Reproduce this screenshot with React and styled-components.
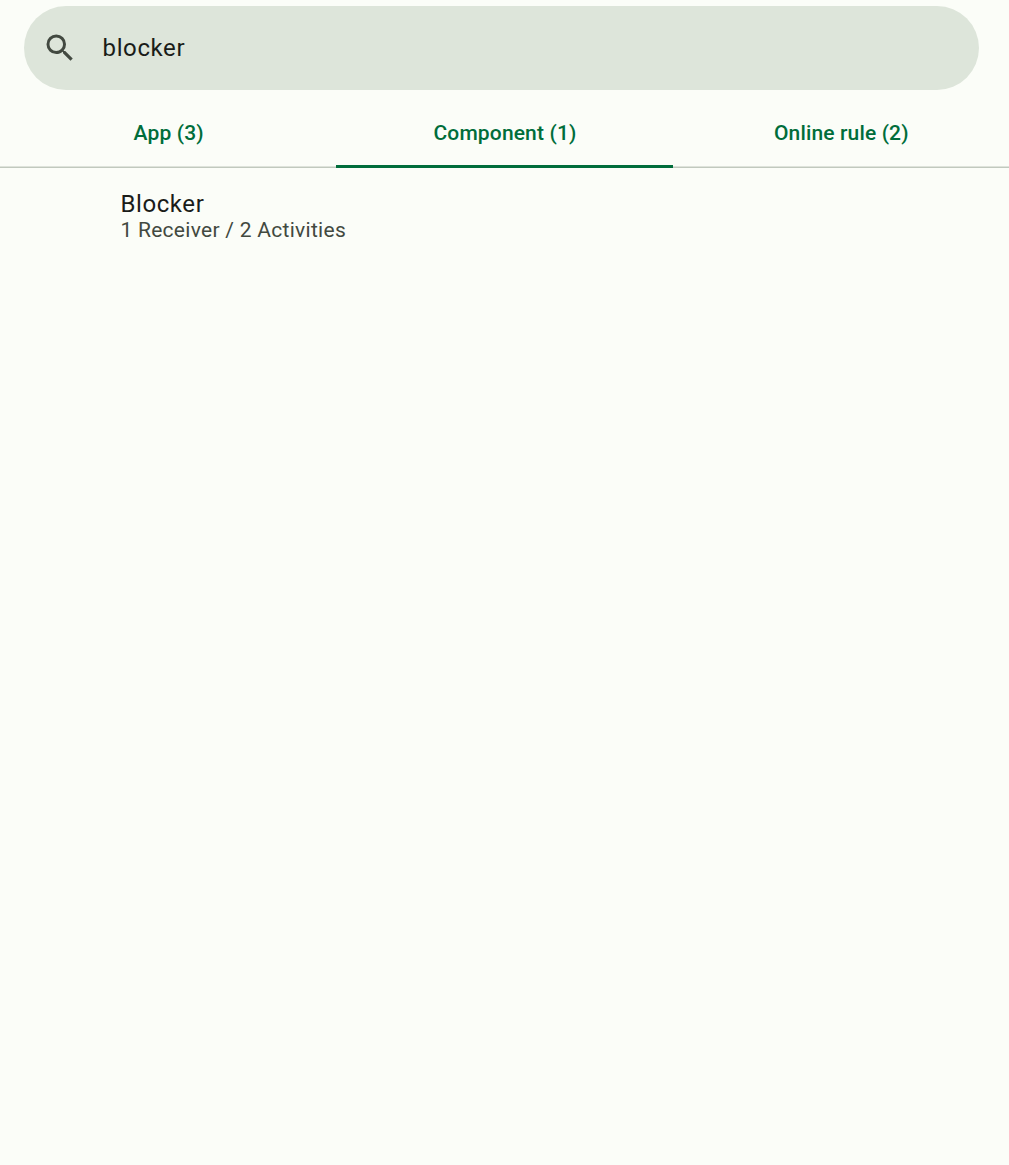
import React from "react";
import styled, { createGlobalStyle } from "styled-components";

const GlobalStyle = createGlobalStyle`
  * { box-sizing: border-box; }
  body {
    margin: 0;
    background: #fbfdf8;
    font-family: Roboto, sans-serif;
  }
`;

const Page = styled.main`
  display: flex;
  flex-direction: column;
  min-height: 1165px;
  padding-top: 6px;
  background: #fbfdf8;
`;

const SearchBar = styled.label`
  display: flex;
  align-items: center;
  gap: 24.6px;
  height: 84px;
  margin: 0 29.6px 0 24px;
  padding-left: 18px;
  border-radius: 42px;
  background: #dde5da;
  color: #424940;
`;

const SearchIcon = styled.svg`
  width: 36px;
  height: 36px;
  fill: currentColor;
`;

const Query = styled.span`
  font-size: 24px;
  line-height: 36px;
  letter-spacing: 0.6px;
  color: #1a1c19;
`;

const TabRow = styled.nav`
  display: grid;
  grid-template-columns: repeat(3, 1fr);
  height: 78px;
  box-shadow: inset 0 -1.5px 0 #c1c9be;
`;

const Tab = styled.button`
  display: flex;
  align-items: center;
  justify-content: center;
  padding: 11px 0 0 1px;
  border: 0;
  border-bottom: 3px solid ${({ $active }) => ($active ? "#006d3b" : "transparent")};
  background: transparent;
  font: 500 21px/30px Roboto, sans-serif;
  letter-spacing: 0.15px;
  color: #006d3b;
`;

const Results = styled.section`
  padding: 21px 24px 0 120.4px;
`;

const ResultTitle = styled.div`
  font-size: 24px;
  line-height: 30px;
  letter-spacing: 0.6px;
  color: #1a1c19;
`;

const ResultSummary = styled.div`
  font-size: 21px;
  line-height: 23px;
  letter-spacing: 0.28px;
  color: #424940;
`;

const tabs = [
  { label: "App (3)" },
  { label: "Component (1)", active: true },
  { label: "Online rule (2)" },
];

export default function App() {
  return (
    <>
      <GlobalStyle />
      <Page>
        <SearchBar>
          <SearchIcon viewBox="0 0 24 24" aria-hidden="true">
            <path d="M15.5 14h-.79l-.28-.27A6.471 6.471 0 0 0 16 9.5 6.5 6.5 0 1 0 9.5 16c1.61 0 3.09-.59 4.23-1.57l.27.28v.79l5 4.99L20.49 19l-4.99-5zm-6 0C7.01 14 5 11.99 5 9.5S7.01 5 9.5 5 14 7.01 14 9.5 11.99 14 9.5 14z" />
          </SearchIcon>
          <Query>blocker</Query>
        </SearchBar>
        <TabRow>
          {tabs.map(({ label, active }) => (
            <Tab key={label} $active={active}>{label}</Tab>
          ))}
        </TabRow>
        <Results>
          <ResultTitle>Blocker</ResultTitle>
          <ResultSummary>1 Receiver / 2 Activities</ResultSummary>
        </Results>
      </Page>
    </>
  );
}
